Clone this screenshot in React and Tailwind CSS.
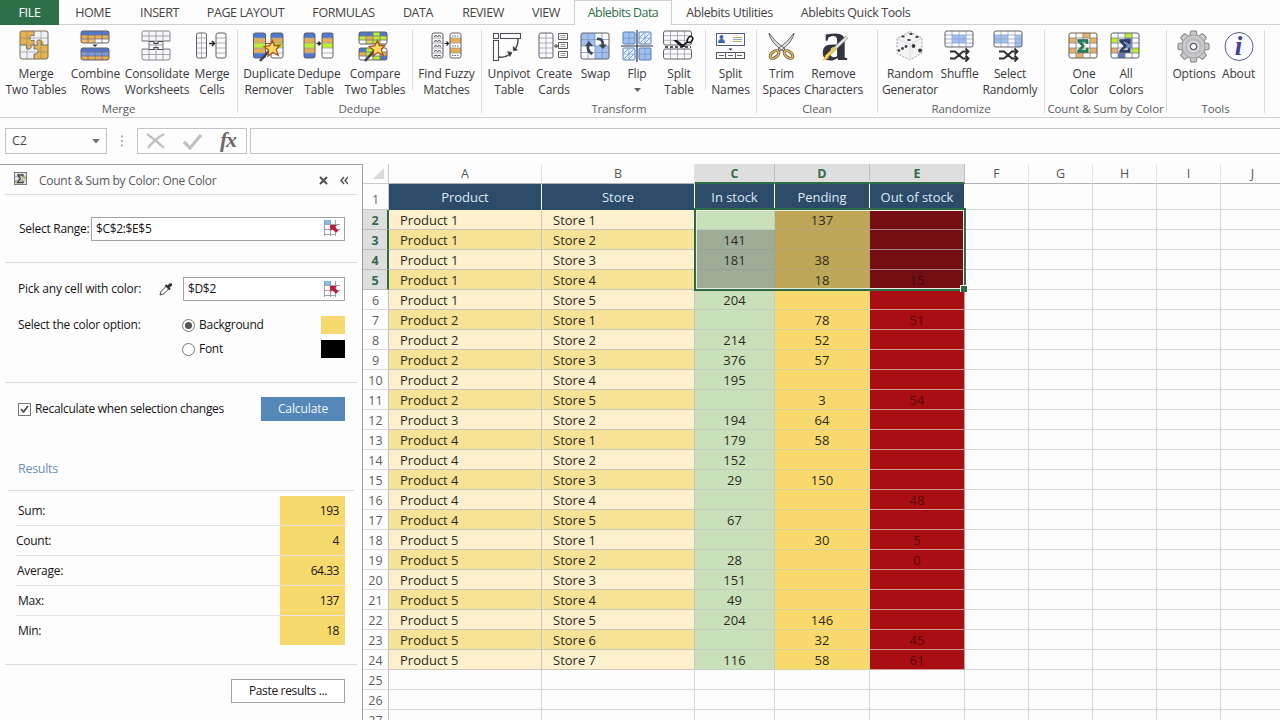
import React from "react";

const INK = "#606068";

function Grid({ x = 1, y = 1, w = 28, h = 28, cols = 4, rows = 4, fills = {}, stroke = INK, inner = "#9a9eaa", r = 2, bg = "#fbfbfd", sw = 1 }) {
  const cw = w / cols;
  const ch = h / rows;
  return (
    <g>
      <rect x={x} y={y} width={w} height={h} rx={r} fill={bg} />
      {Object.entries(fills).map(([k, f]) => {
        const [c, q] = k.split(",").map(Number);
        return <rect key={k} x={x + c * cw} y={y + q * ch} width={cw} height={ch} fill={f} />;
      })}
      {Array.from({ length: cols - 1 }, (_, i) => (
        <path key={"c" + i} d={`M${x + (i + 1) * cw} ${y}v${h}`} stroke={inner} strokeWidth="0.8" />
      ))}
      {Array.from({ length: rows - 1 }, (_, i) => (
        <path key={"r" + i} d={`M${x} ${y + (i + 1) * ch}h${w}`} stroke={inner} strokeWidth="0.8" />
      ))}
      <rect x={x} y={y} width={w} height={h} rx={r} fill="none" stroke={stroke} strokeWidth={sw} />
    </g>
  );
}

function rowFills(cols, colors) {
  const out = {};
  colors.forEach((c, r) => {
    if (c) for (let i = 0; i < cols; i++) out[`${i},${r}`] = c;
  });
  return out;
}

const B = "#4d7ad0";
const O = "#e6ae52";
const L = "#bdf02a";
const LB = "#9dc0ef";

function Wand({ x = 0, y = 0 }) {
  return (
    <g transform={`translate(${x} ${y})`}>
      <path d="M7 31L16 21" stroke="#41424d" strokeWidth="2.6" />
      <path d="M19.500 10.500l1.800 5 5.700-0.200-3.800 4.200 2 5.800-5.400-2.800-4.800 3.600 0.600-6-4.400-3.400 5.600-1z" fill="#ffd95e" stroke="#a8501e" strokeWidth="1.300" />
    </g>
  );
}

function ShuffleArrows() {
  return (
    <g stroke="#2f2f33" strokeWidth="1.900" fill="none">
      <path d="M6 21.500h5l8 7h5M6 28.500h5l8-7h5" />
      <path d="M21.500 18.500l3 3-3 3M21.500 25.500l3 3-3 3" />
    </g>
  );
}

const SIGMA = "M9.500 9.500H20v4h-1.800l-1-1.800h-4.400l3.800 4.300-4 4.300h4.800l1-2H20.200v4.200H9.500v-1.800l4.300-4.700-4.300-4.800z";

const icons = {
  mergeTables: (
    <g>
      <rect x="1" y="1" width="28" height="28" rx="2" fill="#e6b24e" />
      <path d="M15 1h12q2 0 2 2v12h-5q2-4-2-5t-4 3l1 2h-4v-5q-4 2-4-2t4-2zM1 15h7q-2 5 2 4 4-1 1-4h4v4q5-1 4 3-1 3-4 2v5H3q-2 0-2-2z" fill="#eef1f8" />
      <path d="M8 1v28M22 1v28M1 8h28M1 22h28" stroke="#8c836f" strokeWidth="0.800" opacity="0.700" />
      <path d="M15 1v5q-4-2-4 2t4 2v5M15 15h4q-3-5 1-5t2 5h7M1 15h7q-2 5 2 4 4-1 1-4h4v4q5-1 4 3-1 3-4 2v5" fill="none" stroke="#6f6f78" />
      <rect x="1" y="1" width="28" height="28" rx="2" fill="none" stroke="#7b6c53" />
    </g>
  ),
  combine: (
    <g>
      <Grid h={12} rows={3} fills={{ ...rowFills(4, [B, O, "#f3bc60"]), "2,2": "#fff", "3,2": "#fff" }} inner="#6d6d80" />
      <path d="M12.500 14.500h5l-2.500 2.500z" fill="#333" />
      <Grid y={18} h={12} rows={3} fills={{ ...rowFills(4, [B, "#7b9bd5", O]) }} inner="#6d6d80" />
    </g>
  ),
  consolidate: (
    <g>
      <path d="M3 1h24q2 0 2 2v8h-7v8h7v9q0 2-2 2H3q-2 0-2-2v-9h7v-8H1V3q0-2 2-2z" fill="#f7f7fa" stroke="#85858c" />
      <path d="M8 1v29M15 1v29M22 1v29M1 6h28M1 11h28M8 15h14M1 19.500h28M1 24.500h28" stroke="#9a9aa2" strokeWidth="0.900" fill="none" />
      <path d="M8 11.500h5v2h4v-2h5M8 19.500h5v-2h4v2h5" stroke="#4a4a4e" fill="none" strokeWidth="1.200" />
    </g>
  ),
  mergeCells: (
    <g>
      <Grid y={3} x={0.5} w={10} h={25} cols={2} rows={5} />
      <path d="M13 13.500h5M16 11l2.500 2.500-2.500 2.500" stroke="#222" fill="none" strokeWidth="1.500" />
      <Grid y={3} x={20} w={10} h={25} cols={1} rows={5} />
    </g>
  ),
  duplicate: (
    <g>
      <Grid y={3} x={0.5} w={12} h={25} cols={1} rows={5} fills={rowFills(1, [B, O, L, O, B])} />
      <path d="M13 13.500h5" stroke="#b04a2a" strokeWidth="1.300" />
      <Grid y={3} x={18} w={12} h={25} cols={1} rows={5} fills={rowFills(1, [B, O, L, "#fff", "#fff"])} />
      <Wand x={0} />
    </g>
  ),
  dedupe: (
    <g>
      <Grid y={3} x={1} w={11} h={25} cols={1} rows={5} fills={rowFills(1, [B, O, L, O, B])} />
      <path d="M13.500 13.500h4M15.500 11.500l2 2-2 2" stroke="#222" fill="none" strokeWidth="1.300" />
      <Grid y={3} x={19} w={11} h={25} cols={1} rows={5} fills={rowFills(1, [B, O, L, "#fff", "#fff"])} />
    </g>
  ),
  compare: (
    <g>
      <Grid y={2} h={12} rows={3} fills={{ "0,0": B, "1,0": B, "2,0": L, "3,0": B, "0,1": L, "1,1": O, "2,1": L, "3,1": L, "1,2": "#e4d34a", "2,2": L }} inner="#6f7a80" />
      <Grid y={18} h={12} rows={3} fills={{ "0,0": B, "1,0": L, "3,0": "#fff", "0,1": O, "1,1": L, "3,1": O, "0,2": "#fff", "2,2": L, "3,2": B }} inner="#6f7a80" />
      <Wand x={0} />
    </g>
  ),
  fuzzy: (
    <g>
      <Grid y={3} x={1} w={11} h={25} cols={1} rows={5} />
      <path d="M3 6.500l2-1 1.500 1L8 5.500l2 1M3 11.500l2-1 1.500 1L8 10.500l2 1M3 16.500l2-1 1.500 1L8 15.500l2 1M3 21.500l2-1 1.500 1L8 20.500l2 1M3 26.200l2-1 1.500 1L8 25.200l2 1" stroke="#444" fill="none" />
      <path d="M13.500 13.500h4M15.500 11.500l2 2-2 2" stroke="#222" fill="none" strokeWidth="1.200" />
      <Grid y={3} x={19} w={11} h={25} cols={1} rows={5} fills={rowFills(1, ["#fff", O, "#fff", O, "#fff"])} />
      <path d="M21 6h7M21 16h7M21 25.500h7" stroke="#666" strokeDasharray="1.500 1" />
    </g>
  ),
  unpivot: (
    <g stroke="#505054" fill="#fdfdff" strokeWidth="1.100">
      <rect x="0.500" y="3.500" width="5" height="5" />
      <rect x="7.500" y="3.500" width="20" height="5" />
      <rect x="0.500" y="10.500" width="5" height="20" />
      <path d="M25 9q0 8-4 11M6 27q7 1 12-4" fill="none" strokeWidth="1.500" />
      <path d="M20 16.500l0.500 4.500 4-1zM14.500 21.500l4.500 1-2 4z" fill="#333" strokeWidth="0.600" />
    </g>
  ),
  cards: (
    <g>
      <Grid y={3} x={1} w={14} h={25} cols={2} rows={5} />
      <path d="M16 16h3M17.500 14l2 2-2 2" stroke="#222" fill="none" />
      <g fill="#fff" stroke="#5a5a60">
        <path d="M20.500 3.500h9v6h-9zM20.500 12.500h9v6h-9zM20.500 21.500h9v6h-9z" />
        <path d="M22.500 5.500h5M22.500 7.500h5M22.500 14.500h5M22.500 16.500h5M22.500 23.500h5M22.500 25.500h5" stroke="#88888c" strokeWidth="0.900" />
      </g>
    </g>
  ),
  swap: (
    <g>
      <Grid y={3} h={26} fills={{ "0,0": LB, "1,0": LB, "0,1": LB, "1,1": LB, "2,2": LB, "3,2": LB, "2,3": LB, "3,3": LB, "0,2": "#fff" }} inner="#7d92bd" />
      <path d="M12.500 24Q6 21 8.500 14M17 9q6-1 6 6" stroke="#3c4654" strokeWidth="2.700" fill="none" />
      <path d="M5 16l4-5 4 5zM18.500 14.500h8.500L23 19z" fill="#3c4654" />
    </g>
  ),
  flip: (
    <g>
      <Grid x={2} y={2} w={12} h={12} cols={2} rows={2} bg={LB} stroke="#567cb8" inner="#6d95ce" r={1} />
      <Grid x={18} y={2} w={12} h={12} cols={2} rows={2} bg="#e9f2fd" stroke="#567cb8" inner="#7fa3d8" r={1} />
      <Grid x={2} y={18} w={12} h={12} cols={2} rows={2} bg="#e9f2fd" stroke="#567cb8" inner="#7fa3d8" r={1} />
      <Grid x={18} y={18} w={12} h={12} cols={2} rows={2} bg={LB} stroke="#567cb8" inner="#6d95ce" r={1} />
      <path d="M19 7l4-4M19 13L29 3M24 13l5-5M3 23l4-4M3 29l10-10M8 29l5-5" stroke="#6f9fdd" />
      <path d="M0 16h32M16 0v32" stroke="#2c3440" strokeWidth="1.200" />
    </g>
  ),
  splitTable: (
    <g>
      <Grid x={0.5} y={1} w={28} h={14} rows={3} />
      <Grid x={0.5} y={19} w={28} h={10} rows={2} />
      <path d="M2 17h26" stroke="#222" strokeDasharray="3 2" strokeWidth="1.300" />
      <path d="M10 10h4l9 7h-5z" fill="#1f1f22" />
      <path d="M19 16.500l6-5" stroke="#1f1f22" strokeWidth="2" />
      <ellipse cx="27" cy="9.500" rx="2.300" ry="3.300" transform="rotate(35 27 9.500)" fill="#fff" stroke="#1f1f22" strokeWidth="1.600" />
    </g>
  ),
  splitNames: (
    <g>
      <rect x="1.500" y="3.500" width="28" height="12" fill="#fdfdff" stroke="#55607a" />
      <circle cx="6.500" cy="7" r="2" fill="#3d63b5" />
      <path d="M3 13q0-4 3.500-4t3.500 4z" fill="#3d63b5" />
      <path d="M18 7.500h9M18 11.500h9" stroke="#b3b04e" strokeWidth="1.200" />
      <path d="M18 9.500h9" stroke="#86a4c8" />
      <path d="M13.500 18.500h4l-2 2z" fill="#222" />
      <rect x="1.500" y="22.500" width="28" height="6" fill="#fdfdff" stroke="#55555a" />
      <path d="M10.500 22v7M20.500 22v7M4 25.500h5M13 25.500h5M22 25.500h5" stroke="#66666c" />
    </g>
  ),
  trim: (
    <g>
      <path d="M3 3q1 9 14 18l2-2Q8 11 3 3zM28 3q-1 9-14 18l-2-2Q23 11 28 3z" fill="#dfe0e3" stroke="#505055" strokeWidth="0.900" />
      <ellipse cx="8.500" cy="24.500" rx="5" ry="2.900" transform="rotate(-38 8.500 24.500)" fill="#fff" stroke="#6b5836" strokeWidth="3" />
      <ellipse cx="22.500" cy="24.500" rx="5" ry="2.900" transform="rotate(38 22.500 24.500)" fill="#fff" stroke="#6b5836" strokeWidth="3" />
      <ellipse cx="8.500" cy="24.500" rx="5" ry="2.900" transform="rotate(-38 8.500 24.500)" fill="none" stroke="#e0b866" strokeWidth="1.600" />
      <ellipse cx="22.500" cy="24.500" rx="5" ry="2.900" transform="rotate(38 22.500 24.500)" fill="none" stroke="#e0b866" strokeWidth="1.600" />
    </g>
  ),
  remove: (
    <g>
      <text x="3" y="29.500" fontFamily="Liberation Serif, serif" fontWeight="bold" fontSize="56" fill="#33343f" textLength="27" lengthAdjust="spacingAndGlyphs">a</text>
      <path d="M8 27L29 7" stroke="#8d8a80" strokeWidth="3.400" />
      <path d="M4 31l4-6 3 3z" fill="#f0c93c" />
      <path d="M8 27l10-9.500" stroke="#f5cf46" strokeWidth="2.600" />
      <path d="M18 17.500L29 7" stroke="#e6e7ea" strokeWidth="2.200" />
    </g>
  ),
  random: (
    <g>
      <path d="M16 1.500l12 6.500v15l-12 7L3 23.500V8.500z" fill="#f3f3f5" stroke="#a2a2a6" strokeDasharray="2 1.500" />
      <path d="M3 8.500l13 6 12-6.500M16 14.500v15" stroke="#dcdce0" fill="none" />
      <g fill="#3b3b3e">
        <ellipse cx="9" cy="6.500" rx="1.800" ry="0.900" />
        <ellipse cx="17" cy="4" rx="1.800" ry="0.900" />
        <ellipse cx="15" cy="10" rx="1.900" ry="1" />
        <ellipse cx="23" cy="7" rx="1.800" ry="0.900" />
        <circle cx="5" cy="20.500" r="1.300" />
        <circle cx="8.500" cy="18.500" r="1.400" />
        <circle cx="12" cy="16.500" r="1.400" />
        <circle cx="19.500" cy="16" r="1.900" />
        <circle cx="26" cy="20.500" r="1.900" />
      </g>
    </g>
  ),
  shuffle: (
    <g>
      <Grid h={16} rows={4} fills={{ "1,1": LB, "2,1": LB, "1,2": LB, "2,2": LB }} inner="#93a5c6" />
      <ShuffleArrows />
    </g>
  ),
  select: (
    <g>
      <Grid h={16} rows={4} fills={{ "0,1": LB, "1,1": LB, "0,2": LB, "1,2": LB, "3,1": LB, "3,3": LB, "3,2": LB }} inner="#93a5c6" />
      <ShuffleArrows />
    </g>
  ),
  one: (
    <g>
      <Grid y={3} h={25} rows={5} fills={{ "2,0": "#e7b26b", "0,1": "#e7b26b", "3,1": "#e7b26b", "0,3": "#e7b26b", "3,3": "#e7b26b", "1,4": "#e7b26b" }} inner="#8f7f6a" stroke="#6b5c48" />
      <path d={SIGMA} fill="#1c8058" stroke="#11583c" strokeWidth="0.500" />
    </g>
  ),
  all: (
    <g>
      <Grid y={3} h={25} rows={5} fills={{ "2,0": L, "0,1": L, "3,3": L, "0,3": "#e7b26b", "1,4": "#5b78be", "2,1": "#6f8bcc", "2,2": "#6f8bcc" }} inner="#7d8288" stroke="#55606a" />
      <path d={SIGMA} fill="#2a406f" stroke="#1d2d50" strokeWidth="0.500" />
    </g>
  ),
  options: (
    <g transform="translate(15.500 16.500)">
      {[0, 45, 90, 135, 180, 225, 270, 315].map((a) => (
        <path key={a} transform={`rotate(${a})`} d="M-4-10l1.300-5.500h5.400L4-10z" fill="#cacacc" stroke="#808083" />
      ))}
      <circle r="11.500" fill="#cacacc" stroke="#8d8d90" strokeWidth="0.700" />
      <circle r="8.500" fill="#bcbcbf" />
      <circle r="6" fill="#dadadc" />
      <circle r="3.200" fill="#fff" stroke="#606063" strokeWidth="1.200" />
    </g>
  ),
  about: (
    <g>
      <circle cx="16" cy="16.500" r="14" fill="#fdfdff" stroke="#545d80" strokeWidth="1" />
      <text x="15.500" y="25" textAnchor="middle" fontFamily="Liberation Serif, serif" fontStyle="italic" fontWeight="bold" fontSize="27" fill="#41419b">i</text>
    </g>
  ),
};

function Btn({ icon, a, b, w, shift = "", arrow }) {
  return (
    <div className={`flex shrink-0 flex-col items-center ${w}`}>
      <svg width="32" height="32" viewBox="0 0 32 32" className={`shrink-0 overflow-visible ${shift}`}>
        {icons[icon]}
      </svg>
      <div className="mt-1 text-center text-[12px] leading-4 tracking-[-0.15px] whitespace-nowrap text-[#3a3a3c]">
        <div>{a}</div>
        {b && <div>{b}</div>}
        {arrow && (
          <svg width="7" height="4" viewBox="0 0 7 4" className="mx-auto mt-1.5">
            <path d="M0 0h7L3.500 4z" fill="#666" />
          </svg>
        )}
      </div>
    </div>
  );
}

function Sep() {
  return <div className="h-[60px] w-px shrink-0 bg-[#dcdcde]" />;
}

function Group({ w, pad, label, children }) {
  return (
    <div className={`flex h-[83px] shrink-0 flex-col border-r border-[#dcdcde] ${w}`}>
      <div className={`flex h-[72px] shrink-0 ${pad}`}>{children}</div>
      <div className="text-center text-[11.500px] leading-[14px] tracking-[-0.1px] whitespace-nowrap text-[#5c5c5e]">{label}</div>
    </div>
  );
}

const tabs = [
  ["HOME", "w-[68px]"],
  ["INSERT", "w-[65px]"],
  ["PAGE LAYOUT", "w-[107px]"],
  ["FORMULAS", "w-[89px]"],
  ["DATA", "w-[60px]"],
  ["REVIEW", "w-[70px]"],
  ["VIEW", "w-[56px]"],
  ["Ablebits Data", "w-[98px]"],
  ["Ablebits Utilities", "w-[115px]"],
  ["Ablebits Quick Tools", "w-[137px]"],
];

function Tabs() {
  return (
    <div className="flex h-[25px] shrink-0 text-[12.500px] leading-[25px] whitespace-nowrap text-[#444]">
      <div className="w-[59px] bg-[#2d6f48] text-center tracking-[-0.3px] text-white">FILE</div>
      {tabs.map(([t, w], i) => (
        <div
          key={t}
          className={`flex justify-center ${w} ${
            i === 7
              ? "border-x border-t border-[#d0d0d2] leading-[24px] tracking-[-0.55px] text-[#2d7048]"
              : i > 7
                ? "border-b border-[#d0d0d2] tracking-[-0.4px]"
                : "border-b border-[#d0d0d2] tracking-[-0.4px]"
          }`}
        >
          {t}
        </div>
      ))}
      <div className="flex-1 border-b border-[#d0d0d2]" />
    </div>
  );
}

function Ribbon() {
  return (
    <div className="flex h-[93px] shrink-0 border-b border-[#d0d0d2] pt-[5px]">
      <Group w="w-[238px]" pad="pl-[6px]" label="Merge">
        <Btn w="w-[60px]" icon="mergeTables" a="Merge" b="Two Tables" shift="-ml-[2px]" />
        <Btn w="w-[59px]" icon="combine" a="Combine" b="Rows" />
        <Btn w="w-[64px]" icon="consolidate" a="Consolidate" b="Worksheets" shift="-ml-[1px]" />
        <Btn w="w-[46px]" icon="mergeCells" a="Merge" b="Cells" shift="-ml-[1px]" />
      </Group>
      <Group w="w-[244px]" pad="pl-[5px]" label="Dedupe">
        <Btn w="w-[52px]" icon="duplicate" a="Duplicate" b="Remover" />
        <Btn w="w-[48px]" icon="dedupe" a="Dedupe" b="Table" />
        <Btn w="w-[64px]" icon="compare" a="Compare" b="Two Tables" shift="-ml-[3px]" />
        <div className="w-[5px] shrink-0" />
        <Sep />
        <Btn w="w-[67px]" icon="fuzzy" a="Find Fuzzy" b="Matches" />
      </Group>
      <Group w="w-[275px]" pad="pl-[4px]" label="Transform">
        <Btn w="w-[46px]" icon="unpivot" a="Unpivot" b="Table" />
        <Btn w="w-[44px]" icon="cards" a="Create" b="Cards" />
        <Btn w="w-[39px]" icon="swap" a="Swap" />
        <Btn w="w-[44px]" icon="flip" a="Flip" arrow />
        <Btn w="w-[40px]" icon="splitTable" a="Split" b="Table" />
        <div className="w-[6px] shrink-0" />
        <Sep />
        <Btn w="w-[49px]" icon="splitNames" a="Split" b="Names" />
      </Group>
      <Group w="w-[121px]" pad="pl-[6px]" label="Clean">
        <Btn w="w-[37px]" icon="trim" a="Trim" b="Spaces" />
        <Btn w="w-[67px]" icon="remove" a="Remove" b="Characters" />
      </Group>
      <Group w="w-[167px]" pad="pl-[6px]" label="Randomize">
        <Btn w="w-[52px]" icon="random" a="Random" b="Generator" />
        <Btn w="w-[47px]" icon="shuffle" a="Shuffle" />
        <Btn w="w-[54px]" icon="select" a="Select" b="Randomly" shift="-ml-[2px]" />
      </Group>
      <Group w="w-[122px]" pad="pl-[18px]" label="Count &amp; Sum by Color">
        <Btn w="w-[42px]" icon="one" a="One" b="Color" />
        <Btn w="w-[42px]" icon="all" a="All" b="Colors" />
      </Group>
      <Group w="w-[98px]" pad="pl-[3px]" label="Tools">
        <Btn w="w-[48px]" icon="options" a="Options" />
        <Btn w="w-[41px]" icon="about" a="About" />
      </Group>
    </div>
  );
}

function FormulaBar() {
  return (
    <div className="flex h-[46px] shrink-0 items-start pt-[10px] pl-[5px]">
      <div className="flex h-[26px] w-[102px] items-center justify-between border border-[#c4c4c6] pr-[6px] pl-[6px] text-[12.500px] text-[#444]">
        <span>C2</span>
        <svg width="8" height="5" viewBox="0 0 8 5">
          <path d="M0 0h8L4 4.500z" fill="#777" />
        </svg>
      </div>
      <svg width="30" height="26" viewBox="0 0 30 26">
        <path d="M14 7.500h2v2h-2zM14 12h2v2h-2zM14 16.500h2v2h-2z" fill="#b0b0b2" />
      </svg>
      <div className="flex h-[26px] w-[110px] items-center border border-[#c4c4c6]">
        <svg width="108" height="24" viewBox="0 0 108 24" className="overflow-visible">
          <path d="M9 5q9 6 17 14M26 5Q17 10 10 19" stroke="#c0c0c2" strokeWidth="2.300" fill="none" />
          <path d="M46 13l6 6L63 6" stroke="#c0c0c2" strokeWidth="3.200" fill="none" />
          <text x="82" y="18" fontFamily="Liberation Serif, serif" fontStyle="italic" fontWeight="bold" fontSize="22" fill="#69696b" textLength="17">fx</text>
        </svg>
      </div>
      <div className="ml-[3px] h-[26px] flex-1 border border-r-0 border-[#c4c4c6]" />
    </div>
  );
}

function RangeIcon() {
  return (
    <svg width="17" height="17" viewBox="0 0 17 17">
      <rect x="0" y="0" width="7" height="4" fill="#7fc0ea" />
      <path d="M0.500 0v16M6.500 0v16M11.500 0v16M0 4.500h16M0 9.500h16M0 14.500h11" stroke="#96969c" strokeWidth="0.900" />
      <path d="M6 5h7l-2 2 3.500 3.500-2.500 2.300L8.500 9.300 6.500 11z" fill="#c3163c" />
    </svg>
  );
}

function RangeInput({ w, children }) {
  return (
    <div className={`flex h-[24px] items-center justify-between border border-[#a3a3a5] bg-white pr-[3px] pl-[4px] ${w}`}>
      <span className="tracking-[-0.35px]">{children}</span>
      <RangeIcon />
    </div>
  );
}

const results = [
  ["Sum:", "193", "pl-[2px]"],
  ["Count:", "4", ""],
  ["Average:", "64.33", "pl-px"],
  ["Max:", "137", "pl-[2px]"],
  ["Min:", "18", "pl-[2px]"],
];

function Panel() {
  return (
    <div className="flex w-[363px] shrink-0 flex-col border-t border-r border-[#a0a0a2] text-[12px] tracking-[-0.28px] text-[#161616]">
      <div className="mx-[5px] flex h-[30px] shrink-0 items-center border-b border-[#dcdcde] pt-[2px] pl-[9px]">
        <svg width="13" height="13" viewBox="0 0 13 13" className="-mt-[5px]">
          <rect x="0.500" y="0.500" width="12" height="12" fill="#e4e4e2" stroke="#777" />
          <path d="M0 4.500h13M0 8.500h13M4.500 0v13M8.500 0v13" stroke="#999" strokeWidth="0.600" />
          <path d="M3.500 3h5.500v1.500M9 9v1.500H3.500l3-4-3-3.500" fill="none" stroke="#44444a" strokeWidth="1.300" />
          <path d="M9.500 5h2.500v2H9.500zM1 9h2v2H1z" fill="#b7b94a" />
        </svg>
        <span className="ml-[12px] text-[#5a5a5c]">Count &amp; Sum by Color: One Color</span>
        <svg width="29" height="9" viewBox="0 0 29 9" className="mr-[9px] ml-auto">
          <path d="M1 1l7 7M8 1L1 8" stroke="#505052" strokeWidth="2" />
          <path d="M25 1l-3 3.500 3 3.500M29 1l-3 3.500 3 3.500" stroke="#505052" strokeWidth="1.400" fill="none" />
        </svg>
      </div>
      <div className="mx-[5px] flex h-[68px] shrink-0 items-center border-b border-[#dcdcde] pl-[14px]">
        <span className="w-[72px] whitespace-nowrap">Select Range:</span>
        <RangeInput w="w-[254px]">$C$2:$E$5</RangeInput>
      </div>
      <div className="mx-[5px] flex h-[120px] shrink-0 flex-col border-b border-[#dcdcde] pt-[14px] pl-[13px]">
        <div className="flex h-[24px] items-center">
          <span className="w-[141px] tracking-[-0.22px] whitespace-nowrap">Pick any cell with color:</span>
          <svg width="14" height="14" viewBox="0 0 14 14" className="mr-[10px]">
            <path d="M1 13l1-3.500 6-6 2.500 2.500-6 6z" fill="#fff" stroke="#444" />
            <path d="M6.500 3l4.500 4.500M8.500 5l3-3" stroke="#333" strokeWidth="2" />
            <path d="M9 4.500Q10.500 1 12 1t1 2.500L10 6z" fill="#333" />
          </svg>
          <RangeInput w="w-[162px]">$D$2</RangeInput>
        </div>
        <div className="mt-[12px] flex h-[24px] items-center tracking-[-0.25px]">
          <span className="w-[164px]">Select the color option:</span>
          <span className="flex h-[13px] w-[13px] items-center justify-center rounded-full border border-[#777] bg-white">
            <span className="h-[7px] w-[7px] rounded-full bg-[#555]" />
          </span>
          <span className="ml-[4px]">Background</span>
          <span className="mr-[12px] ml-auto h-[18px] w-[24px] bg-[#f6da6d]" />
        </div>
        <div className="flex h-[24px] items-center pl-[164px]">
          <span className="h-[13px] w-[13px] rounded-full border border-[#777] bg-white" />
          <span className="ml-[4px]">Font</span>
          <span className="mr-[12px] ml-auto h-[18px] w-[24px] bg-black" />
        </div>
      </div>
      <div className="mx-[8px] flex h-[108px] shrink-0 flex-col border-b border-[#dcdcde] pt-[14px] pl-[10px]">
        <div className="flex h-[24px] items-center">
          <svg width="13" height="13" viewBox="0 0 13 13">
            <rect x="0.500" y="0.500" width="12" height="12" fill="#fff" stroke="#777" />
            <path d="M3 6l2.500 3L10 3" stroke="#444" strokeWidth="1.700" fill="none" />
          </svg>
          <span className="ml-[4px] tracking-[-0.31px]">Recalculate when selection changes</span>
          <button className="mr-[9px] ml-auto h-[24px] w-[84px] bg-[#5488ba] tracking-[-0.1px] text-[#f2f6fa]">Calculate</button>
        </div>
        <div className="mt-[39px] text-[12.500px] leading-[18px] text-[#6a8fb5]">Results</div>
      </div>
      <div className="mx-[5px] flex h-[174px] shrink-0 flex-col border-b border-[#dcdcde] pt-[5px] pr-[12px] pl-[11px]">
        {results.map(([k, v, p], i) => (
          <div key={k} className={`flex items-stretch leading-[29px] ${i < 4 ? "h-[30px] border-b border-[#e6e4dc]" : "h-[29px]"}`}>
            <span className={`flex-1 ${p}`}>{k}</span>
            <span className="w-[65px] bg-[#f7da6c] pr-[6px] text-right tracking-[-0.45px]">{v}</span>
          </div>
        ))}
      </div>
      <button className="mt-[14px] mr-[17px] h-[24px] w-[114px] shrink-0 self-end border border-[#a3a3a5] bg-white tracking-[-0.35px]">Paste results ...</button>
    </div>
  );
}

const rows = [
  ["Product 1", "Store 1", "", "137", ""],
  ["Product 1", "Store 2", "141", "", ""],
  ["Product 1", "Store 3", "181", "38", ""],
  ["Product 1", "Store 4", "", "18", "15"],
  ["Product 1", "Store 5", "204", "", ""],
  ["Product 2", "Store 1", "", "78", "51"],
  ["Product 2", "Store 2", "214", "52", ""],
  ["Product 2", "Store 3", "376", "57", ""],
  ["Product 2", "Store 4", "195", "", ""],
  ["Product 2", "Store 5", "", "3", "54"],
  ["Product 3", "Store 2", "194", "64", ""],
  ["Product 4", "Store 1", "179", "58", ""],
  ["Product 4", "Store 2", "152", "", ""],
  ["Product 4", "Store 3", "29", "150", ""],
  ["Product 4", "Store 4", "", "", "48"],
  ["Product 4", "Store 5", "67", "", ""],
  ["Product 5", "Store 1", "", "30", "5"],
  ["Product 5", "Store 2", "28", "", "0"],
  ["Product 5", "Store 3", "151", "", ""],
  ["Product 5", "Store 4", "49", "", ""],
  ["Product 5", "Store 5", "204", "146", ""],
  ["Product 5", "Store 6", "", "32", "45"],
  ["Product 5", "Store 7", "116", "58", "61"],
];

const COLS = "grid grid-cols-[26px_153px_153px_80px_95px_95px_64px_64px_64px_64px_64px] shrink-0";

function Sheet() {
  return (
    <div className="relative w-[917px] overflow-hidden text-[13px] text-[#2f2a20]">
      <div className={`${COLS} h-[20px] grid-rows-[20px] leading-[20px]`}>
        <div className="flex items-end justify-end border-r border-b border-[#c9c9cb] pr-[4px] pb-[4px]">
          <svg width="11" height="11" viewBox="0 0 11 11">
            <path d="M11 0v11H0z" fill="#d9d9db" />
          </svg>
        </div>
        {"ABCDEFGHIJ".split("").map((c, i) => (
          <div
            key={c}
            className={`text-center text-[12.500px] ${
              i > 1 && i < 5
                ? "border-r border-b-2 border-r-[#bdbdbf] border-b-[#2d6b45] bg-[#dededf] font-bold text-[#336a4b]"
                : "border-r border-b border-r-[#e2e2e4] border-b-[#b5b5b7] text-[#555]"
            }`}
          >
            {c}
          </div>
        ))}
      </div>
      <div className={`${COLS} h-[26px] grid-rows-[26px] leading-[26px]`}>
        <div className="border-r border-b border-[#c9c9cb] pt-[3px] text-center text-[12.500px] text-[#666]">1</div>
        {["Product", "Store", "In stock", "Pending", "Out of stock"].map((h) => (
          <div key={h} className="border-r border-white bg-[#2b4b69] text-center tracking-[-0.05px] whitespace-nowrap text-[#dfe8f1]">
            {h}
          </div>
        ))}
        {[0, 1, 2, 3, 4].map((i) => (
          <div key={i} className="border-r border-b border-[#d6d6d8]" />
        ))}
      </div>
      {Array.from({ length: 26 }, (_, r) => {
        const d = rows[r];
        const sel = r < 4;
        return (
          <div key={r} className={`${COLS} h-[20px] grid-rows-[20px] leading-[20px]`}>
            <div
              className={`pt-px text-center text-[12.500px] ${
                sel
                  ? "border-r-2 border-b border-r-[#2d6b45] border-b-[#bdbdbf] bg-[#dededf] font-bold text-[#336a4b]"
                  : "border-r border-b border-r-[#c0c0c2] border-b-[#dcdcde] text-[#5f5f61]"
              }`}
            >
              {r + 2}
            </div>
            {d ? (
              <>
                <div className={`border-r border-b border-[#cbc5be] pl-[11px] ${r % 2 ? "bg-[#f7e396]" : "bg-[#fcf0cd]"}`}>{d[0]}</div>
                <div className={`border-r border-b border-[#cbc5be] pl-[11px] ${r % 2 ? "bg-[#f7e396]" : "bg-[#fcf0cd]"}`}>{d[1]}</div>
                <div className={`border-r border-b text-center ${sel && r > 0 ? "border-[#98a396] bg-[#9eac97]" : "border-[#c3cdc0] bg-[#cae0ba]"}`}>{d[2]}</div>
                <div className={`border-r border-b text-center ${sel ? "border-[#b4a27c] bg-[#bda656]" : "border-[#dcd0a5] bg-[#f8da6c]"}`}>{d[3]}</div>
                <div className={`border-r border-b text-center ${sel ? "border-[#a58084] bg-[#750e12] text-[#420a0c]" : "border-[#cf9b9e] bg-[#a80e12] text-[#5a090b]"}`}>{d[4]}</div>
              </>
            ) : (
              [0, 1, 2, 3, 4].map((i) => <div key={i} className="border-r border-b border-[#d6d6d8]" />)
            )}
            {[5, 6, 7, 8, 9].map((i) => (
              <div key={i} className="border-r border-b border-[#d6d6d8]" />
            ))}
          </div>
        );
      })}
      <div className="absolute top-[44px] left-[331px] h-[83px] w-[272px] border-2 border-[#2d6b45]">
        <div className="h-full w-full border border-[#e9eee4]" />
        <div className="absolute -right-[3px] -bottom-[3px] h-[7px] w-[7px] border-t border-l border-white bg-[#2d6b45]" />
      </div>
    </div>
  );
}

export default function App() {
  return (
    <div className="flex h-[720px] w-[1280px] flex-col overflow-hidden bg-[#fdfdfd] font-['Open_Sans','Noto_Sans',sans-serif]">
      <Tabs />
      <Ribbon />
      <FormulaBar />
      <div className="flex min-h-0 flex-1">
        <Panel />
        <Sheet />
      </div>
    </div>
  );
}
